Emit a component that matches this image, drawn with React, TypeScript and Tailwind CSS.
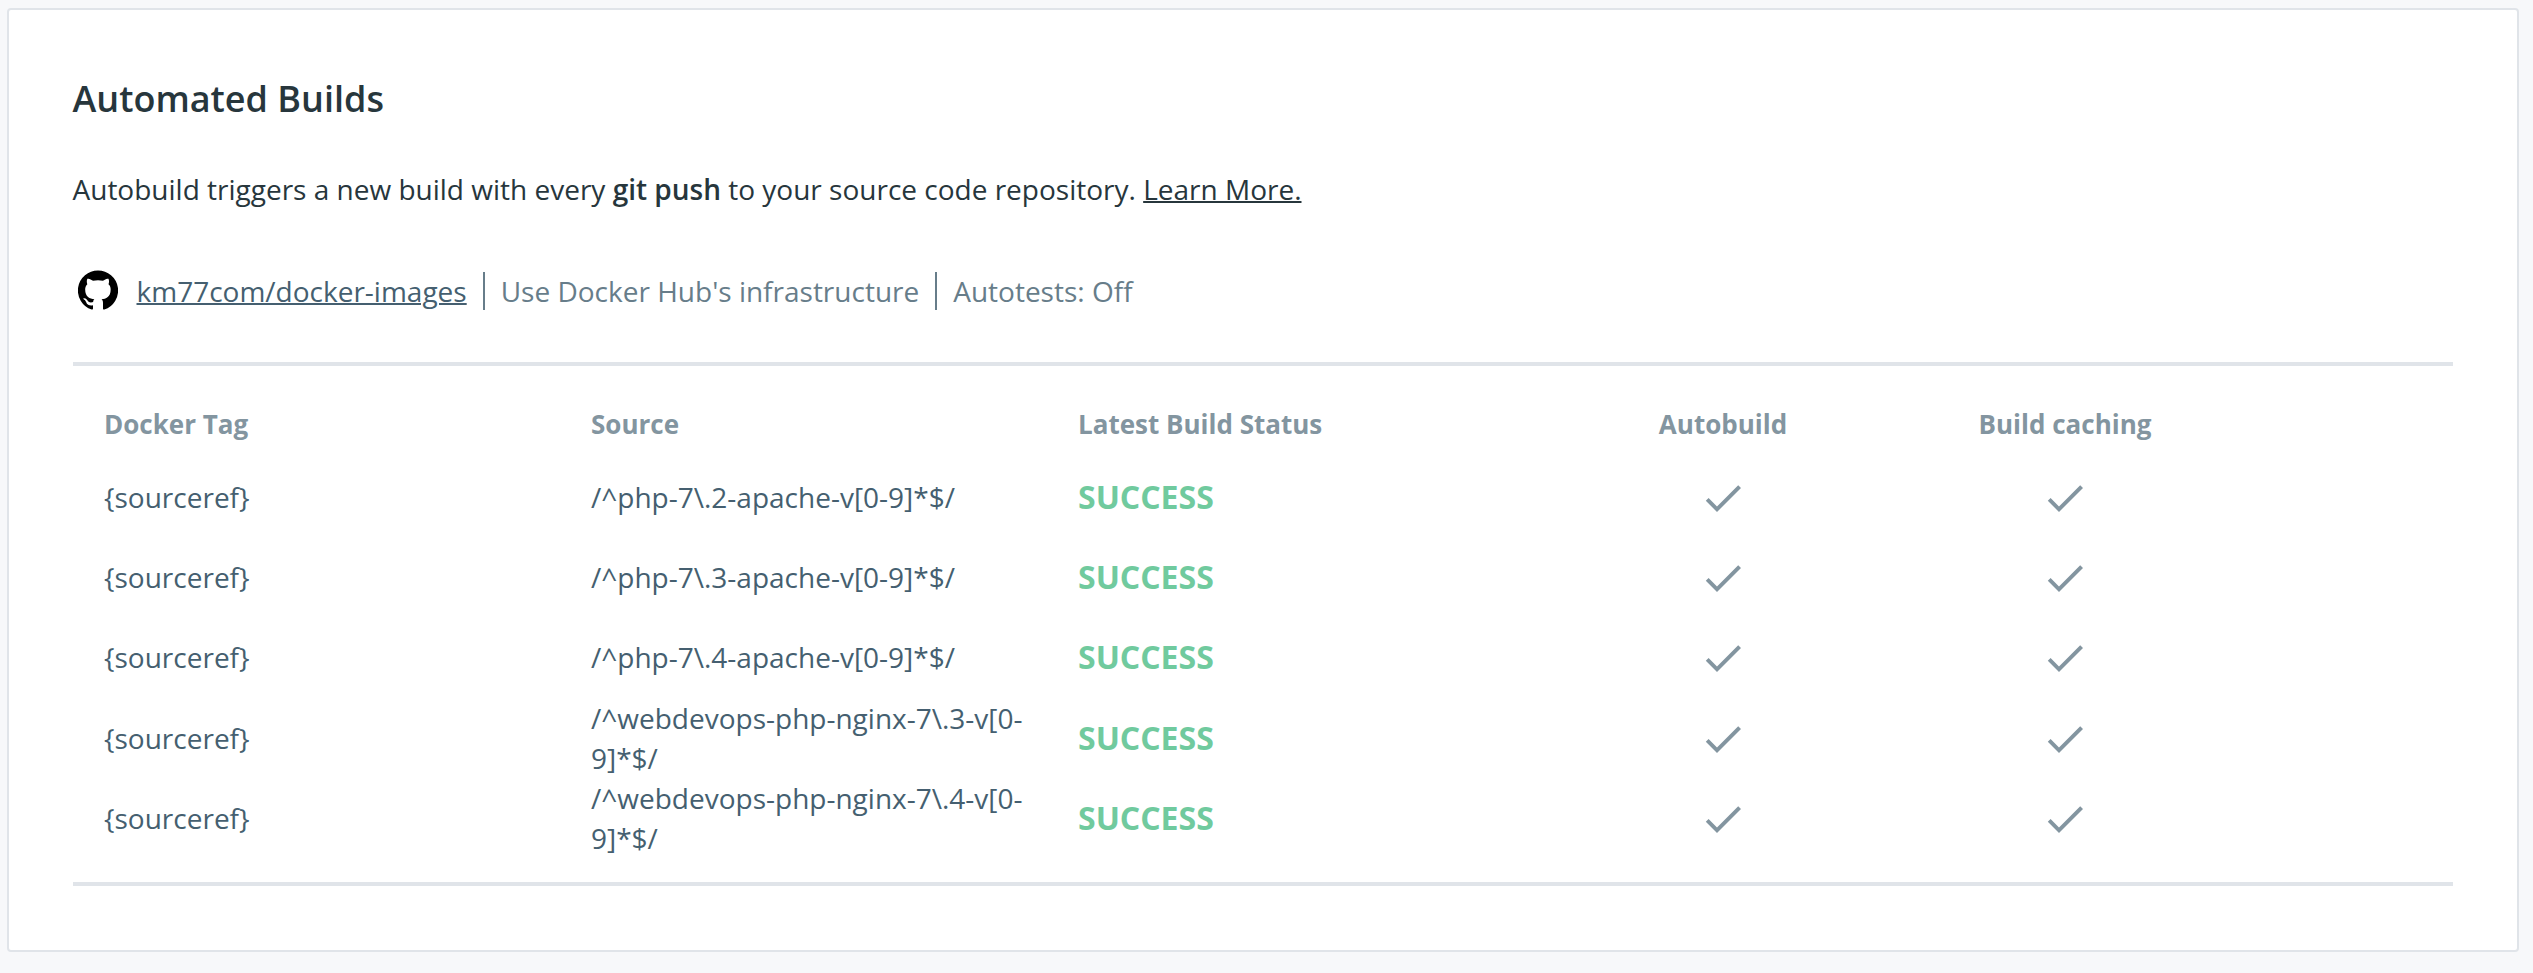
const CheckIcon = () => (
  <svg viewBox="0 0 24 24" className="size-12 fill-[#8395a0]" aria-hidden="true">
    <path d="M9 16.2L4.8 12l-1.4 1.4L9 19 21 7l-1.4-1.4L9 16.2z" />
  </svg>
);

const GithubIcon = () => (
  <svg viewBox="0 0 24 24" className="mb-0.5 size-10 shrink-0 fill-black" aria-hidden="true">
    <path d="M12 .3a12 12 0 0 0-3.8 23.4c.6.1.8-.3.8-.6v-2c-3.3.7-4-1.6-4-1.6-.6-1.4-1.4-1.8-1.4-1.8-1-.7.1-.7.1-.7 1.2 0 1.9 1.2 1.9 1.2 1 1.8 2.8 1.3 3.5 1 0-.8.4-1.3.7-1.6-2.7-.3-5.500-1.300-5.500-6 0-1.200.5-2.300 1.300-3.100-.2-.4-.6-1.600 0-3.200 0 0 1-.3 3.400 1.200a11.500 11.500 0 0 1 6 0c2.300-1.500 3.300-1.200 3.300-1.200.6 1.600.2 2.800 0 3.200.9.8 1.300 1.900 1.300 3.200 0 4.600-2.800 5.600-5.500 5.900.5.4.9 1 .9 2.200v3.300c0 .3.1.7.8.6A12 12 0 0 0 12 .3" />
  </svg>
);

const builds = [
  { tag: "{sourceref}", source: "/^php-7\\.2-apache-v[0-9]*$/", status: "SUCCESS" },
  { tag: "{sourceref}", source: "/^php-7\\.3-apache-v[0-9]*$/", status: "SUCCESS" },
  { tag: "{sourceref}", source: "/^php-7\\.4-apache-v[0-9]*$/", status: "SUCCESS" },
  { tag: "{sourceref}", source: "/^webdevops-php-nginx-7\\.3-v[0-9]*$/", status: "SUCCESS" },
  { tag: "{sourceref}", source: "/^webdevops-php-nginx-7\\.4-v[0-9]*$/", status: "SUCCESS" },
];

const columns = "grid grid-cols-[487px_487px_474px_342px_342px] items-center pl-[31.5px]";

export default function App() {
  return (
    <div className="h-[973px] bg-[#f7f8fa] pt-2 pr-[14px] pl-[7px] font-['Open_Sans',sans-serif]">
      <section className="flex h-[944px] flex-col rounded-[4px] border-2 border-[#e0e4e9] bg-white pt-[62px] pr-16 pl-[63.5px]">
        <h2 className="text-[36px] leading-[54px] font-semibold text-[#27363c]">Automated Builds</h2>
        <p className="mt-[42px] text-[28px] leading-[42px] text-[#27363c]">
          Autobuild triggers a new build with every <b className="font-semibold">git push</b> to your source code
          repository. <a className="underline decoration-2" href="#">Learn More.</a>
        </p>
        <div className="mt-[60px] flex h-[42px] items-center pl-[5px] text-[28px] leading-[40px] text-[#677d8a]">
          <GithubIcon />
          <a className="ml-[19px] text-[#455f70] underline decoration-2" href="#">km77com/docker-images</a>
          <span className="ml-4 h-[38px] w-[2px] bg-[#677d8a]" />
          <span className="ml-4">Use Docker Hub's infrastructure</span>
          <span className="ml-4 h-[38px] w-[2px] bg-[#677d8a]" />
          <span className="ml-4">Autotests: Off</span>
        </div>
        <div className="mt-[50px] border-y-4 border-[#e0e4e9] pt-[38px] pb-6">
          <div className={columns + " mb-[14px] h-[40px] text-[26px] leading-[40px] font-bold text-[#8395a0]"}>
            <div>Docker Tag</div>
            <div>Source</div>
            <div>Latest Build Status</div>
            <div className="text-center">Autobuild</div>
            <div className="text-center">Build caching</div>
          </div>
          {builds.map((build) => (
            <div key={build.source} className={columns + " h-20 text-[28px] leading-[40px] text-[#455f70]"}>
              <div className="pb-0.5">{build.tag}</div>
              <div className="pr-10 pb-0.5">{build.source}</div>
              <div className="pb-0.5 text-[32px] font-bold text-[#70ca9e]">{build.status}</div>
              <div className="flex justify-center"><CheckIcon /></div>
              <div className="flex justify-center"><CheckIcon /></div>
            </div>
          ))}
        </div>
      </section>
    </div>
  );
}
